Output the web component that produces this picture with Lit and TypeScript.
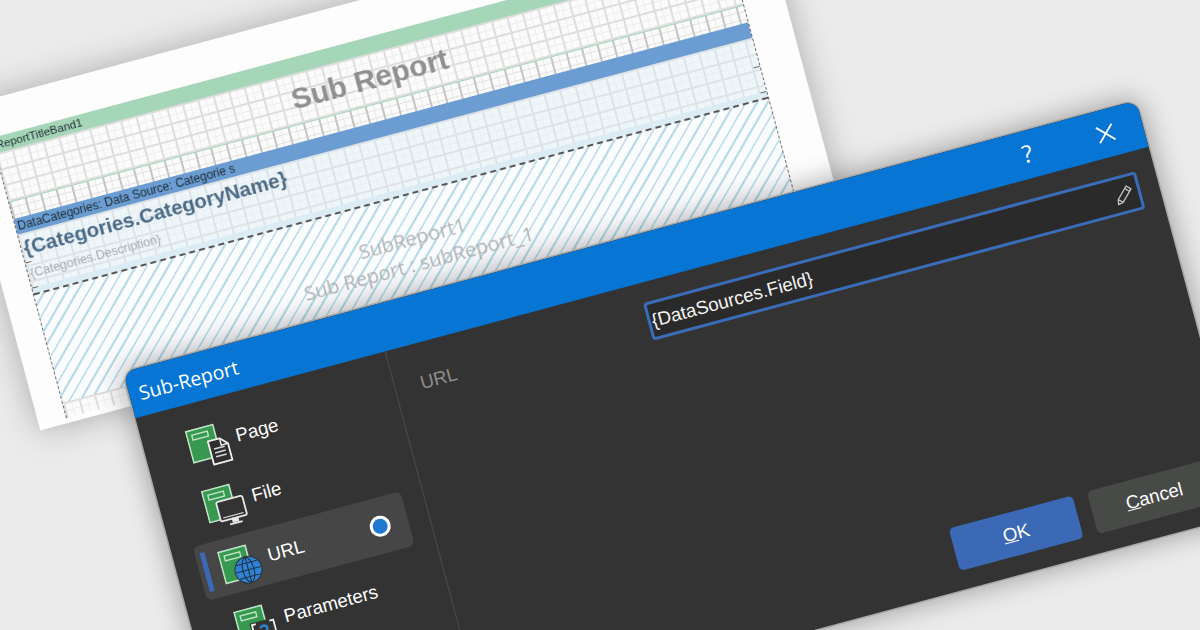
import { LitElement, html, css, svg } from "lit";
import { customElement } from "lit/decorators.js";

const base = svg`<rect x="1" y="1" width="28" height="32" fill="#36994f" stroke="#bfe3c6" stroke-width="1.6"/><rect x="6" y="6" width="16" height="5" fill="none" stroke="#bfe3c6" stroke-width="1.4"/>`;

const overlays: Record<string, unknown> = {
  page: svg`<path d="M20 16h12l7 7v17H20z" fill="#2f2f2f" stroke="#f0f0f0" stroke-width="1.8" stroke-linejoin="round"/><path d="M32 16v7h7" fill="none" stroke="#f0f0f0" stroke-width="1.4"/><path d="M24 25h11M24 29h11M24 33h11" stroke="#d8d8d8" stroke-width="1.6"/>`,
  file: svg`<rect x="12" y="15" width="27" height="20" rx="2" fill="#333" stroke="#e8e8e8" stroke-width="1.8"/><path d="M15 32h21" stroke="#e8e8e8" stroke-width="1"/><path d="M24 35h5v3h-5zM20 40h13" fill="#e8e8e8" stroke="#e8e8e8" stroke-width="1.8"/>`,
  url: svg`<circle cx="26" cy="25.500" r="14" fill="#2f2f2f"/><circle cx="26" cy="25.500" r="13" fill="#2f83d6"/><g fill="none" stroke="#1f3040" stroke-width="1.100"><ellipse cx="26" cy="25.500" rx="5.600" ry="12.500"/><path d="M26 13v25M13.500 25.500h25M15.500 18.500h21M15.500 32.500h21"/></g>`,
  params: svg`<rect x="13" y="16" width="26" height="24" fill="#333"/><path d="M19 18h-4v20h4M33 18h4v20h-4" fill="none" stroke="#f0f0f0" stroke-width="1.8"/><path d="M22 23q4-3.500 7 0q1 3-3 5v3M26 33v2" fill="none" stroke="#2f83d6" stroke-width="2.4"/>`,
};

const items = [
  { key: "page", label: "Page" },
  { key: "file", label: "File" },
  { key: "url", label: "URL", selected: true },
  { key: "params", label: "Parameters" },
];

@customElement("app-root")
export class AppRoot extends LitElement {
  static styles = css`
    :host {
      display: block;
      position: relative;
      width: 1200px;
      height: 630px;
      overflow: hidden;
      background: #ebebeb;
      font-family: "Liberation Sans", Arial, sans-serif;
    }
    .scene {
      position: absolute;
      left: 123px;
      top: 372px;
      width: 0;
      height: 0;
      transform: rotate(-15deg);
      transform-origin: 0 0;
    }
    .sheet {
      position: absolute;
      left: -95px;
      top: -298px;
      width: 831px;
      height: 333px;
      box-sizing: border-box;
      padding: 38px 41px 0 28px;
      background: #fdfdfd;
      box-shadow: 0 0 32px rgba(0, 0, 0, 0.28);
      filter: blur(0.35px);
    }
    .frame {
      display: flex;
      flex-direction: column;
      height: 290px;
      border-left: 1.500px dashed #666;
      border-right: 1.500px dashed #666;
    }
    .grid {
      background-color: #fbfbfb;
      background-image:
        linear-gradient(#dedede 1.700px, transparent 1.700px),
        linear-gradient(90deg, #dedede 1.700px, transparent 1.700px),
        linear-gradient(#eeeeee 1.300px, transparent 1.300px),
        linear-gradient(90deg, #eeeeee 1.300px, transparent 1.300px);
      background-size: 16px 16px, 16px 16px, 8px 8px, 8px 8px;
    }
    .band {
      display: flex;
      align-items: center;
      flex: none;
      height: 16px;
      padding-left: 2px;
      font-size: 11.500px;
      color: #1c2a30;
      white-space: nowrap;
      overflow: hidden;
    }
    .green {
      background: #a6d6b8;
    }
    .blue {
      background: #6b9cd2;
      font-size: 12px;
    }
    .title-area {
      flex: none;
      height: 50px;
      display: flex;
      align-items: center;
      justify-content: center;
      border-bottom: 1px solid #a6d6b8;
      font-size: 30px;
      font-weight: 700;
      color: #8f8f8f;
    }
    .gap {
      flex: none;
      height: 16.500px;
      background-color: #fbfbfb;
      background-image:
        linear-gradient(90deg, #c4c4c4 1.800px, transparent 1.800px),
        linear-gradient(#e2e2e2 1.200px, transparent 1.200px),
        linear-gradient(90deg, #e8e8e8 1.200px, transparent 1.200px);
      background-size: 16px 16px, 8px 8px, 8px 8px;
      background-position: 0 0, 0 5px, 0 0;
    }
    .details {
      position: relative;
      flex: none;
      height: 63.500px;
      box-sizing: border-box;
      padding: 3px 0 0 2px;
      display: flex;
      flex-direction: column;
      background-color: #eff6fa;
      background-image:
        linear-gradient(#dcecf4, #dcecf4),
        linear-gradient(#dde3e6 1.700px, transparent 1.700px),
        linear-gradient(90deg, #dde3e6 1.700px, transparent 1.700px),
        linear-gradient(#e8eff3 1.300px, transparent 1.300px),
        linear-gradient(90deg, #e8eff3 1.300px, transparent 1.300px);
      background-size: 100% 6px, 16px 16px, 16px 16px, 8px 8px, 8px 8px;
      background-position: 0 100%, 0 0, 0 0, 0 0, 0 0;
      background-repeat: no-repeat, repeat, repeat, repeat, repeat;
      border-bottom: 2px dashed #555;
    }
    .tick {
      position: absolute;
      width: 6px;
      height: 1.500px;
      background: #666;
    }
    .tick.l {
      left: 0;
    }
    .tick.r {
      right: 0;
    }
    .t1 {
      top: 29px;
    }
    .t2 {
      top: 55px;
    }
    .cat-name {
      font-size: 20.500px;
      font-weight: 700;
      line-height: 24px;
      color: #4a6a86;
    }
    .cat-desc {
      margin-top: 7px;
      font-size: 12.500px;
      line-height: 15px;
      color: #a4a9ad;
    }
    .hatch {
      flex: none;
      height: 111px;
      display: flex;
      flex-direction: column;
      align-items: center;
      padding-top: 30px;
      box-sizing: border-box;
      font-family: "Open Sans", sans-serif;
      font-size: 20px;
      line-height: 26px;
      color: #b4b4b4;
      background-color: #fafcfd;
      background-image: repeating-linear-gradient(
        -45deg,
        #b4d9e8 0,
        #b4d9e8 1.800px,
        transparent 1.800px,
        transparent 9.500px
      );
    }
    .foot {
      flex: 1;
    }
    .dialog {
      position: absolute;
      left: 0;
      top: 0;
      width: 1049px;
      height: 428px;
      display: flex;
      flex-direction: column;
      background: #333;
      border-radius: 12px 12px 0 0;
      box-shadow: 0 0 0 1.500px #a8a8a8, 0 0 26px 4px rgba(0, 0, 0, 0.3);
      overflow: hidden;
    }
    .titlebar {
      flex: none;
      height: 48px;
      display: flex;
      align-items: center;
      padding: 0 27px 0 10px;
      background: #0675d3;
      color: #fff;
    }
    .titlebar .name {
      font-family: "Open Sans", sans-serif;
      font-size: 19.500px;
      flex: 1;
    }
    .help {
      font-size: 24px;
      margin-right: 65px;
      margin-top: -3px;
      font-family: "Open Sans", sans-serif;
    }
    .close {
      display: block;
      width: 22px;
      height: 22px;
    }
    .body {
      flex: 1;
      display: flex;
      min-height: 0;
    }
    .side {
      flex: none;
      width: 259px;
      box-sizing: border-box;
      padding: 14.500px 21px 0 22px;
      border-right: 1px solid #4c4c4c;
      display: flex;
      flex-direction: column;
      gap: 6.400px;
    }
    .item {
      flex: none;
      height: 56px;
      display: flex;
      align-items: center;
      padding: 0 18px 0 5px;
      border-radius: 6px;
      font-size: 18.700px;
      color: #fff;
    }
    .item.selected {
      background: #464646;
    }
    .marker {
      flex: none;
      width: 5px;
      height: 40px;
      margin-right: 11.500px;
    }
    .selected .marker {
      background: #3b69b5;
    }
    .icon {
      flex: none;
      align-self: flex-start;
      display: block;
      width: 49px;
      height: 44px;
      margin: 10.500px 0 0;
    }
    .radio {
      flex: none;
      margin-left: auto;
      width: 15px;
      height: 15px;
      border: 3px solid #fff;
      border-radius: 50%;
      background: #1f78d1;
    }
    .main {
      flex: 1;
      display: flex;
      flex-direction: column;
      justify-content: space-between;
      padding: 20px 19px 19px 25.500px;
    }
    .field-row {
      display: flex;
      align-items: center;
      justify-content: space-between;
      height: 39px;
    }
    .label {
      font-size: 18.700px;
      color: #8e8e8e;
    }
    .input {
      width: 510px;
      height: 39px;
      box-sizing: border-box;
      display: flex;
      align-items: center;
      justify-content: space-between;
      padding: 0 3px 0 1px;
      border: 3px solid #3b6cb8;
      border-radius: 4px;
      background: #2a2a2a;
      font-size: 18.700px;
      color: #f4f4f4;
    }
    .pencil {
      display: block;
      width: 22px;
      height: 22px;
    }
    .buttons {
      display: flex;
      justify-content: flex-end;
      gap: 15px;
      margin-right: 2px;
    }
    .btn {
      width: 128px;
      height: 44px;
      display: flex;
      align-items: center;
      justify-content: center;
      border-radius: 5px;
      font-size: 18.700px;
      color: #fff;
      background: #484a48;
    }
    .btn.primary {
      background: #3b69b5;
    }
  `;

  render() {
    return html`
      <div class="scene">
        <div class="sheet">
          <div class="frame">
            <div class="band green">ReportTitleBand1</div>
            <div class="title-area grid">Sub Report</div>
            <div class="gap"></div>
            <div class="band blue">DataCategories: Data Source: Categorie s</div>
            <div class="details">
              <div class="cat-name">{Categories.CategoryName}</div>
              <div class="cat-desc">{Categories.Description}</div>
              <div class="tick l t1"></div>
              <div class="tick l t2"></div>
              <div class="tick r t1"></div>
              <div class="tick r t2"></div>
            </div>
            <div class="hatch">
              <div>SubReport1</div>
              <div>Sub Report : subReport_1</div>
            </div>
            <div class="foot grid"></div>
          </div>
        </div>
        <div class="dialog">
          <div class="titlebar">
            <div class="name">Sub-Report</div>
            <div class="help">?</div>
            <svg class="close" viewBox="0 0 22 22">
              <path d="M3 3l16 16M19 3L3 19" stroke="#fff" stroke-width="1.800" fill="none" />
            </svg>
          </div>
          <div class="body">
            <div class="side">
              ${items.map(
                (i) => html`
                  <div class="item ${i.selected ? "selected" : ""}">
                    <div class="marker"></div>
                    <svg class="icon" viewBox="0 0 49 44" preserveAspectRatio="xMinYMin meet">${base}${overlays[i.key]}</svg>
                    <div>${i.label}</div>
                    ${i.selected ? html`<div class="radio"></div>` : ""}
                  </div>
                `
              )}
            </div>
            <div class="main">
              <div class="field-row">
                <div class="label">URL</div>
                <div class="input">
                  <span>{DataSources.Field}</span>
                  <svg class="pencil" viewBox="0 0 22 22">
                    <path
                      d="M15 3l4 4L8 18l-5 1 1-5zM13 5l4 4M4 14l4 4"
                      fill="none"
                      stroke="#c4c4c4"
                      stroke-width="1.300"
                      stroke-linejoin="round"
                    />
                  </svg>
                </div>
              </div>
              <div class="buttons">
                <div class="btn primary"><span><u>O</u>K</span></div>
                <div class="btn"><span><u>C</u>ancel</span></div>
              </div>
            </div>
          </div>
        </div>
      </div>
    `;
  }
}
